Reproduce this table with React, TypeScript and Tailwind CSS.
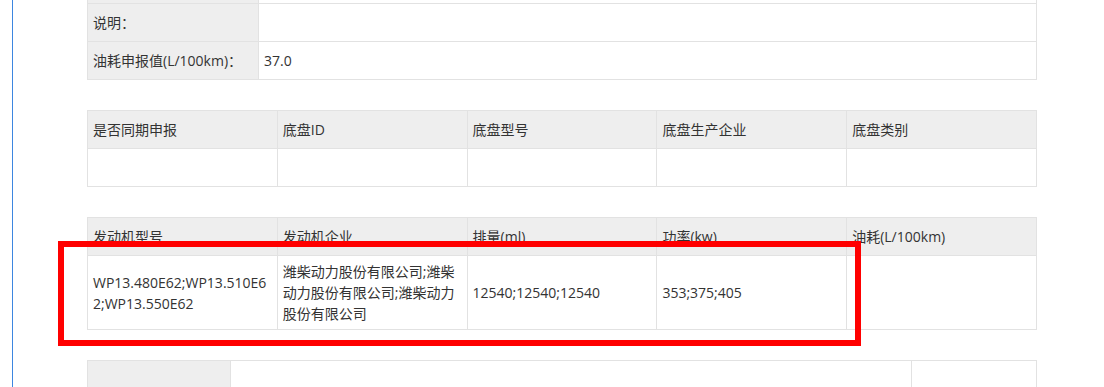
const font = { fontFamily: '"Open Sans", "Noto Sans CJK SC", sans-serif' };

const th = 'border border-[#e2e2e2] bg-[#eeeeee] h-[38px] px-[5px] py-[5px] text-left font-normal align-middle';
const td = 'border border-[#e2e2e2] bg-white h-[38px] px-[5px] py-[5px] text-left align-middle break-all';

function InfoTable() {
  const rows: [string, string][] = [
    ['', ''],
    ['说明：', ''],
    ['油耗申报值(L/100km)：', '37.0'],
  ];
  return (
    <table className="w-[950px] border-collapse table-fixed -mt-[35px]">
      <colgroup>
        <col className="w-[171px]" />
        <col />
      </colgroup>
      <tbody>
        {rows.map(([k, v], i) => (
          <tr key={i}>
            <td className={th}>{k}</td>
            <td className={td}>{v}</td>
          </tr>
        ))}
      </tbody>
    </table>
  );
}

function GridTable({ heads, cells }: { heads: string[]; cells: string[] }) {
  return (
    <table className="w-[950px] border-collapse table-fixed mt-[30px]">
      <thead>
        <tr>
          {heads.map((h) => (
            <th key={h} className={th}>{h}</th>
          ))}
        </tr>
      </thead>
      <tbody>
        <tr>
          {cells.map((c, i) => (
            <td key={i} className={td}>{c}</td>
          ))}
        </tr>
      </tbody>
    </table>
  );
}

export default function App() {
  return (
    <div className="relative h-[387px] w-[1104px] overflow-hidden bg-white text-[14px] leading-[21px] text-[#333]" style={font}>
      <div className="ml-[12px] flex h-full flex-col border-l border-[#3d86e0] pl-[74px]">
        <InfoTable />
        <GridTable
          heads={['是否同期申报', '底盘ID', '底盘型号', '底盘生产企业', '底盘类别']}
          cells={['', '', '', '', '']}
        />
        <GridTable
          heads={['发动机型号', '发动机企业', '排量(ml)', '功率(kw)', '油耗(L/100km)']}
          cells={[
            'WP13.480E62;WP13.510E62;WP13.550E62',
            '潍柴动力股份有限公司;潍柴动力股份有限公司;潍柴动力股份有限公司',
            '12540;12540;12540',
            '353;375;405',
            '',
          ]}
        />
        <table className="w-[950px] border-collapse table-fixed mt-[30px]">
          <colgroup>
            <col className="w-[143px]" />
            <col className="w-[681px]" />
            <col />
          </colgroup>
          <tbody>
            <tr>
              <td className={th}></td>
              <td className={td}></td>
              <td className={td}></td>
            </tr>
          </tbody>
        </table>
      </div>
      <div className="absolute left-[58px] top-[241px] h-[105px] w-[803px] border-[6px] border-[#ff0000]" />
    </div>
  );
}
